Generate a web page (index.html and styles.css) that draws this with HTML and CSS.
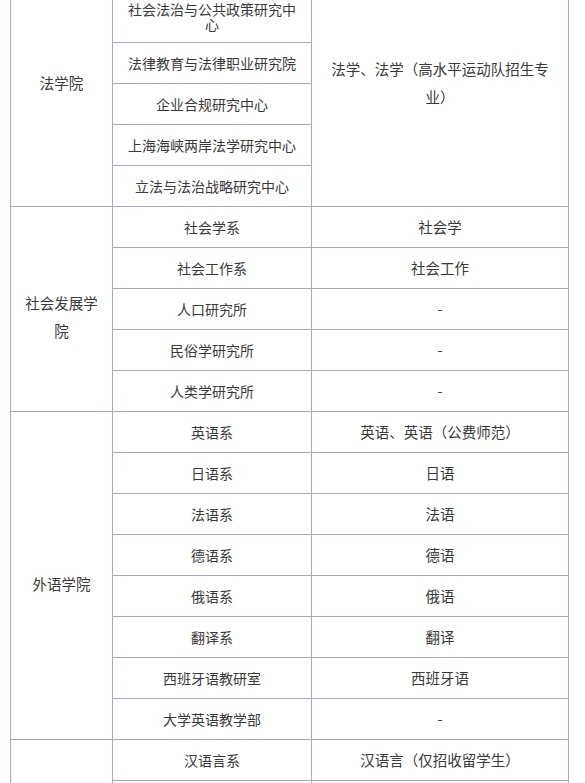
FILE: index.html
```html
<!DOCTYPE html>
<html lang="zh-CN">
<head>
<meta charset="utf-8">
<title>院系与专业</title>
<link rel="stylesheet" href="styles.css">
</head>
<body>
<div class="wrap">
<table class="majors">
<colgroup><col class="c1"><col class="c2"><col class="c3"></colgroup>
<tbody>
<tr>
  <td rowspan="5" class="college">法学院</td>
  <td class="unit first">社会法治与公共政策研究中心</td>
  <td rowspan="5" class="major">法学、法学（高水平运动队招生专业）</td>
</tr>
<tr><td class="unit">法律教育与法律职业研究院</td></tr>
<tr><td class="unit">企业合规研究中心</td></tr>
<tr><td class="unit">上海海峡两岸法学研究中心</td></tr>
<tr><td class="unit">立法与法治战略研究中心</td></tr>

<tr>
  <td rowspan="5" class="college shifted">社会发展学院</td>
  <td class="unit">社会学系</td>
  <td class="major">社会学</td>
</tr>
<tr><td class="unit">社会工作系</td><td class="major">社会工作</td></tr>
<tr><td class="unit">人口研究所</td><td class="major">-</td></tr>
<tr><td class="unit">民俗学研究所</td><td class="major">-</td></tr>
<tr><td class="unit">人类学研究所</td><td class="major">-</td></tr>

<tr>
  <td rowspan="8" class="college shifted">外语学院</td>
  <td class="unit">英语系</td>
  <td class="major">英语、英语（公费师范）</td>
</tr>
<tr><td class="unit">日语系</td><td class="major">日语</td></tr>
<tr><td class="unit">法语系</td><td class="major">法语</td></tr>
<tr><td class="unit">德语系</td><td class="major">德语</td></tr>
<tr><td class="unit">俄语系</td><td class="major">俄语</td></tr>
<tr><td class="unit">翻译系</td><td class="major">翻译</td></tr>
<tr><td class="unit">西班牙语教研室</td><td class="major">西班牙语</td></tr>
<tr><td class="unit">大学英语教学部</td><td class="major">-</td></tr>

<tr>
  <td rowspan="2" class="college"></td>
  <td class="unit">汉语言系</td>
  <td class="major">汉语言（仅招收留学生）</td>
</tr>
<tr><td class="unit"></td><td class="major"></td></tr>
</tbody>
</table>
</div>
</body>
</html>
```

FILE: styles.css
```css
html, body {
  margin: 0;
  padding: 0;
  background: #ffffff;
}

.wrap {
  padding-left: 10px;
  margin-top: -41px;
}

.majors {
  border-collapse: collapse;
  table-layout: fixed;
  width: 558px;
  font-family: "Noto Sans CJK SC", "Microsoft YaHei", sans-serif;
  color: #3a3a3a;
}

.c1 { width: 102px; }
.c2 { width: 199px; }
.c3 { width: 257px; }

.majors td {
  border: 1px solid #aba5d5;
  height: 41px;
  padding: 0 12px;
  text-align: center;
  vertical-align: middle;
  box-sizing: border-box;
}

.college,
.major {
  font-size: 14.5px;
  line-height: 28px;
}

.unit {
  font-size: 14px;
  line-height: 15px;
  padding-bottom: 1px;
}

.majors td.first {
  height: 83px;
  vertical-align: bottom;
  padding-bottom: 10px;
}

.majors td.shifted {
  padding-top: 16px;
}
```
